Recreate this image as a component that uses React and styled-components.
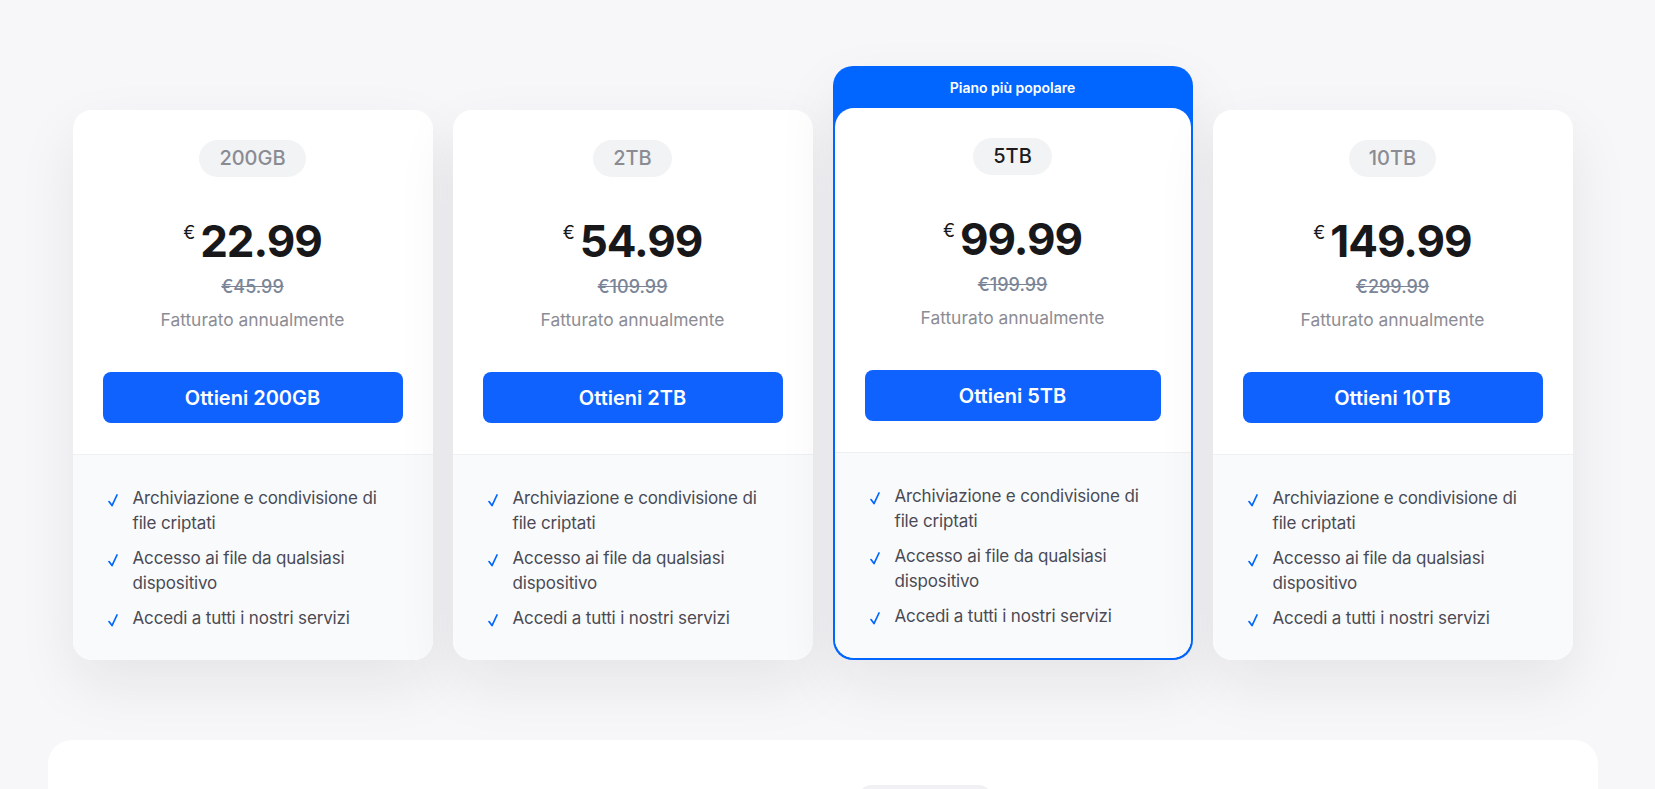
import React from 'react'
import styled, { createGlobalStyle } from 'styled-components'

const GlobalStyle = createGlobalStyle`
  html, body {
    margin: 0;
    padding: 0;
    overflow: hidden;
    background: #f7f7f9;
    font-family: Inter, "Noto Sans", sans-serif;
    -webkit-font-smoothing: antialiased;
  }
`

const plans = [
  { id: 0, size: '200GB', price: '22.99', old: '€45.99' },
  { id: 1, size: '2TB', price: '54.99', old: '€109.99' },
  { id: 2, size: '5TB', price: '99.99', old: '€199.99', popular: true },
  { id: 3, size: '10TB', price: '149.99', old: '€299.99' },
]

const features = [
  'Archiviazione e condivisione di file criptati',
  'Accesso ai file da qualsiasi dispositivo',
  'Accedi a tutti i nostri servizi',
]

const Check = () => (
  <svg width="10" height="13" viewBox="0 0 10 13" fill="none">
    <path
      d="M1 7.6 L4 11.6 L9 1"
      stroke="#0066ff"
      strokeWidth="1.7"
      strokeLinecap="round"
      strokeLinejoin="round"
    />
  </svg>
)

const PlanCard = ({ plan }) => (
  <Card>
    <Top>
      <SizePill $active={plan.popular}>{plan.size}</SizePill>
      <PriceRow>
        <Currency>€</Currency>
        <Amount>{plan.price}</Amount>
      </PriceRow>
      <OldPrice>{plan.old}</OldPrice>
      <Billing>Fatturato annualmente</Billing>
      <BuyButton>Ottieni {plan.size}</BuyButton>
    </Top>
    <Features>
      {features.map(f => (
        <Feature key={f}>
          <CheckBox>
            <Check />
          </CheckBox>
          <span>{f}</span>
        </Feature>
      ))}
    </Features>
  </Card>
)

const App = () => {
  return (
    <Page>
      <GlobalStyle />
      <CardsRow>
        {plans.map(plan =>
          plan.popular ? (
            <Popular key={plan.id}>
              <PopularLabel>Piano più popolare</PopularLabel>
              <PlanCard plan={plan} />
            </Popular>
          ) : (
            <Slot key={plan.id}>
              <PlanCard plan={plan} />
            </Slot>
          )
        )}
      </CardsRow>
      <BottomPanel>
        <BottomHead>
          <Toggle />
        </BottomHead>
      </BottomPanel>
    </Page>
  )
}

const Page = styled.div`
  box-sizing: border-box;
  width: 1655px;
  padding: 66px 10px 0 0;
  min-height: 789px;
`

const CardsRow = styled.div`
  width: 1500px;
  margin: 0 auto;
  display: grid;
  grid-template-columns: repeat(4, 1fr);
  gap: 20px;
  align-items: end;
`

const Slot = styled.div`
  border-radius: 20px;
  box-shadow: 0 24px 60px rgba(20, 20, 40, 0.08);
`

const Popular = styled.div`
  background: #0066ff;
  border-radius: 20px;
  padding: 0 2px 2px;
  box-shadow: 0 24px 60px rgba(20, 20, 40, 0.08);
`

const PopularLabel = styled.div`
  height: 42px;
  display: flex;
  align-items: center;
  justify-content: center;
  color: #ffffff;
  font-size: 14px;
  font-weight: 600;
`

const Card = styled.div`
  background: #ffffff;
  border-radius: 19px;
  overflow: hidden;
`

const Top = styled.div`
  display: flex;
  flex-direction: column;
  align-items: center;
  padding: 30px 30px 31px;
  border-bottom: 1px solid #eff0f3;
`

const SizePill = styled.div`
  height: 37px;
  line-height: 37px;
  padding: 0 20px;
  border-radius: 19px;
  background: #f2f3f5;
  font-size: 20px;
  font-weight: 500;
  color: ${p => (p.$active ? '#1c1c1f' : '#8b8b93')};
`

const PriceRow = styled.div`
  display: flex;
  align-items: flex-start;
  margin-top: 42px;
  color: #18181b;
`

const Currency = styled.span`
  font-size: 18px;
  line-height: 1;
  margin-top: 5px;
  margin-right: 5px;
`

const Amount = styled.span`
  font-size: 44px;
  font-weight: 700;
  line-height: 44px;
  letter-spacing: -1px;
`

const OldPrice = styled.div`
  margin-top: 12px;
  font-size: 18px;
  line-height: 24px;
  font-weight: 500;
  color: #7b8598;
  text-decoration: line-through;
`

const Billing = styled.div`
  margin-top: 9px;
  font-size: 17.4px;
  line-height: 24px;
  color: #8c8c94;
`

const BuyButton = styled.button`
  margin-top: 40px;
  width: 100%;
  height: 51px;
  border: none;
  border-radius: 8px;
  background: #0f62fe;
  color: #ffffff;
  font-family: inherit;
  font-size: 20px;
  font-weight: 600;
  cursor: pointer;
`

const Features = styled.ul`
  list-style: none;
  margin: 0;
  background: #f9fafb;
  padding: 31px 40px 29px 35px;
  display: flex;
  flex-direction: column;
  gap: 10px;
`

const Feature = styled.li`
  display: flex;
  gap: 15px;
  font-size: 17px;
  line-height: 25px;
  letter-spacing: -0.15px;
  color: #4a4a55;
`

const CheckBox = styled.span`
  flex: none;
  display: flex;
  padding-top: 8px;
  height: 13px;
`

const BottomPanel = styled.div`
  width: 1550px;
  height: 300px;
  margin: 80px auto 0;
  background: #ffffff;
  border-radius: 24px;
`

const BottomHead = styled.div`
  display: flex;
  justify-content: center;
  padding-top: 45px;
`

const Toggle = styled.div`
  width: 132px;
  height: 40px;
  margin-left: 204px;
  border-radius: 12px;
  background: #f1f1f5;
`

export default App
